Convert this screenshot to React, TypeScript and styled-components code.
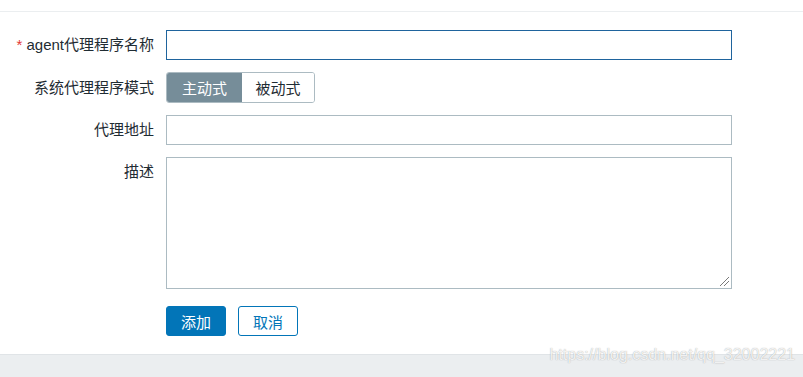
import React from 'react';
import styled, { createGlobalStyle } from 'styled-components';

const GlobalStyle = createGlobalStyle`
  html, body {
    margin: 0;
    padding: 0;
    background: #ffffff;
  }
  body {
    font-family: Arial, 'Liberation Sans', 'Noto Sans CJK SC', sans-serif;
    font-size: 15px;
    color: #1f2c33;
  }
`;

const App: React.FC = () => {
  return (
    <Page>
      <GlobalStyle />
      <TopBar />
      <Form>
        <Label>
          <Required>*</Required> agent代理程序名称
        </Label>
        <Field>
          <TextInput focused />
        </Field>

        <Label>系统代理程序模式</Label>
        <Field>
          <Segmented>
            <Segment active>主动式</Segment>
            <Segment>被动式</Segment>
          </Segmented>
        </Field>

        <Label>代理地址</Label>
        <Field>
          <TextInput />
        </Field>

        <Label top>描述</Label>
        <Field>
          <TextArea />
        </Field>

        <span />
        <Actions>
          <PrimaryButton>添加</PrimaryButton>
          <SecondaryButton>取消</SecondaryButton>
        </Actions>
      </Form>
      <Footer>
        <Watermark>https://blog.csdn.net/qq_32002221</Watermark>
      </Footer>
    </Page>
  );
};

const Page = styled.div`
  width: 803px;
  height: 377px;
  display: flex;
  flex-direction: column;
  overflow: hidden;
`;

const TopBar = styled.div`
  height: 11px;
  border-bottom: 1px solid #ebeef0;
  flex-shrink: 0;
`;

const Form = styled.div`
  display: grid;
  grid-template-columns: 154px 566px;
  column-gap: 12px;
  row-gap: 12px;
  padding-top: 18px;
  padding-bottom: 18px;
  flex: 1;
  align-content: start;
`;

const Label = styled.div<{ top?: boolean }>`
  text-align: right;
  white-space: nowrap;
  line-height: 18px;
  align-self: ${(p) => (p.top ? 'start' : 'center')};
  padding-top: ${(p) => (p.top ? '6px' : '0')};
  color: #1f2c33;
`;

const Required = styled.span`
  color: #e33734;
`;

const Field = styled.div`
  display: flex;
`;

const TextInput = styled.div<{ focused?: boolean }>`
  width: 566px;
  height: 30px;
  box-sizing: border-box;
  border: 1px solid ${(p) => (p.focused ? '#1f649d' : '#acbbc2')};
  background: #ffffff;
`;

const TextArea = styled.div`
  position: relative;
  width: 566px;
  height: 132px;
  box-sizing: border-box;
  border: 1px solid #acbbc2;
  background: #ffffff;

  &::after {
    content: '';
    position: absolute;
    right: 2px;
    bottom: 2px;
    width: 9px;
    height: 9px;
    background: linear-gradient(
      135deg,
      transparent 0 45%,
      #7a7a7a 45% 52%,
      transparent 52% 70%,
      #7a7a7a 70% 77%,
      transparent 77%
    );
  }
`;

const Segmented = styled.div`
  display: flex;
  height: 31px;
  box-sizing: border-box;
  border: 1px solid #acbbc2;
  border-radius: 3px;
  overflow: hidden;
`;

const Segment = styled.div<{ active?: boolean }>`
  width: ${(p) => (p.active ? '75px' : '72px')};
  display: flex;
  align-items: center;
  justify-content: center;
  background: ${(p) => (p.active ? '#768d99' : '#ffffff')};
  color: ${(p) => (p.active ? '#ffffff' : '#1f2c33')};
`;

const Actions = styled.div`
  display: flex;
  gap: 12px;
  margin-top: 5px;
`;

const PrimaryButton = styled.div`
  width: 60px;
  height: 30px;
  box-sizing: border-box;
  border-radius: 3px;
  background: #0275b8;
  border: 1px solid #0275b8;
  color: #ffffff;
  display: flex;
  align-items: center;
  justify-content: center;
`;

const SecondaryButton = styled(PrimaryButton)`
  background: #ffffff;
  color: #0275b8;
`;

const Footer = styled.div`
  position: relative;
  height: 22px;
  flex-shrink: 0;
  background: #ebeef0;
  border-top: 1px solid #e0e4e7;
`;

const Watermark = styled.div`
  position: absolute;
  right: 8px;
  top: -9px;
  font-family: 'Liberation Sans', Arial, sans-serif;
  font-size: 16px;
  color: rgba(255, 255, 255, 0.85);
  text-shadow: 0 0 1px rgba(120, 120, 120, 0.7);
  white-space: nowrap;
`;

export default App;
